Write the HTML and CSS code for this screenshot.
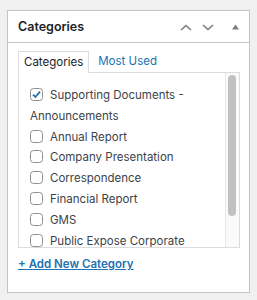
FILE: index.html
```html
<!DOCTYPE html>
<html lang="en">
<head>
    <meta charset="UTF-8">
    <meta name="viewport" content="width=device-width, initial-scale=1.0">
    <title>Categories</title>
    <link rel="stylesheet" href="styles.css">
</head>
<body>

<div class="postbox">
    <div class="postbox-header">
        <h2>Categories</h2>
        <div class="handle-actions">
            <svg class="chevron" width="12" height="7" viewBox="0 0 12 7"><path d="M1 6L6 1.5L11 6" fill="none" stroke="#787c82" stroke-width="1.6"/></svg>
            <svg class="chevron" width="12" height="7" viewBox="0 0 12 7"><path d="M1 1L6 5.5L11 1" fill="none" stroke="#787c82" stroke-width="1.6"/></svg>
            <svg class="toggle" width="7" height="6" viewBox="0 0 7 6"><path d="M3.5 0.5L7 5.5H0Z" fill="#787c82"/></svg>
        </div>
    </div>
    <div class="inside">
        <ul class="category-tabs">
            <li class="tabs">Categories</li>
            <li><a href="#">Most Used</a></li>
        </ul>
        <div class="tabs-panel">
            <ul class="categorychecklist">
                <li><label><span class="check"><svg width="11" height="11" viewBox="0 0 11 11"><path d="M2 5.6L4.4 8L9 2.6" fill="none" stroke="#2271b1" stroke-width="1.8"/></svg></span>Supporting Documents - Announcements</label></li>
                <li><label><span class="check"></span>Annual Report</label></li>
                <li><label><span class="check"></span>Company Presentation</label></li>
                <li><label><span class="check"></span>Correspondence</label></li>
                <li><label><span class="check"></span>Financial Report</label></li>
                <li><label><span class="check"></span>GMS</label></li>
                <li><label><span class="check"></span>Public Expose Corporate</label></li>
            </ul>
            <div class="scroll-track">
                <div class="scroll-thumb"></div>
            </div>
        </div>
        <a class="add-new" href="#">+ Add New Category</a>
    </div>
</div>

</body>
</html>
```

FILE: styles.css
```css
body {
    margin: 0;
    padding: 10px 8px 0 7px;
    background-color: #f0f0f1;
    color: #3c434a;
    font-family: Inter, "Noto Sans", sans-serif;
    font-size: 11.5px;
}
.postbox {
    width: 241px;
    height: 281px;
    background: #fff;
    border: 1px solid #c3c4c7;
}
.postbox-header {
    height: 31px;
    border-bottom: 1px solid #c3c4c7;
    display: flex;
    align-items: center;
    justify-content: space-between;
    padding: 0 10px 0 10px;
}
.postbox-header h2 {
    margin: 0;
    font-size: 12.5px;
    font-weight: 600;
    color: #1d2327;
}
.handle-actions {
    display: flex;
    align-items: center;
    margin-top: 1px;
}
.chevron {
    margin-right: 10px;
}
.toggle {
    margin-left: 8px;
}
.inside {
    padding: 8px 9px 0 10px;
}
.category-tabs {
    list-style: none;
    margin: 0;
    padding: 0;
    display: flex;
    height: 22px;
}
.category-tabs li {
    padding: 0 8px 0 9px;
    line-height: 21px;
}
.category-tabs li.tabs {
    padding: 0 5px;
    border: 1px solid #dcdcde;
    border-bottom: 1px solid #fff;
    background: #fff;
    color: #1d2327;
    position: relative;
    z-index: 1;
}
.category-tabs a {
    color: #2271b1;
    text-decoration: none;
}
.tabs-panel {
    height: 174px;
    border: 1px solid #dcdcde;
    margin-top: -1px;
    overflow: hidden;
    background: #fff;
    display: flex;
}
.categorychecklist {
    flex: 1;
    list-style: none;
    margin: 0;
    padding: 12px 0 0 11px;
}
.categorychecklist li {
    line-height: 20.8px;
}
.scroll-track {
    width: 14px;
    box-sizing: border-box;
    background: #fafafa;
    border-left: 1px solid #e8e8e8;
    padding: 2px 3px 0 2px;
}
.scroll-thumb {
    height: 141px;
    background: #c1c1c1;
    border-radius: 4px;
}
.check {
    display: inline-block;
    width: 13px;
    height: 13px;
    border: 1px solid #8c8f94;
    border-radius: 3.5px;
    box-sizing: border-box;
    vertical-align: -2px;
    margin-right: 7px;
    position: relative;
}
.check svg {
    position: absolute;
    left: 0;
    top: 0;
}
.add-new {
    display: inline-block;
    margin-top: 9px;
    color: #2271b1;
    font-weight: 600;
    text-decoration: underline;
}
```
